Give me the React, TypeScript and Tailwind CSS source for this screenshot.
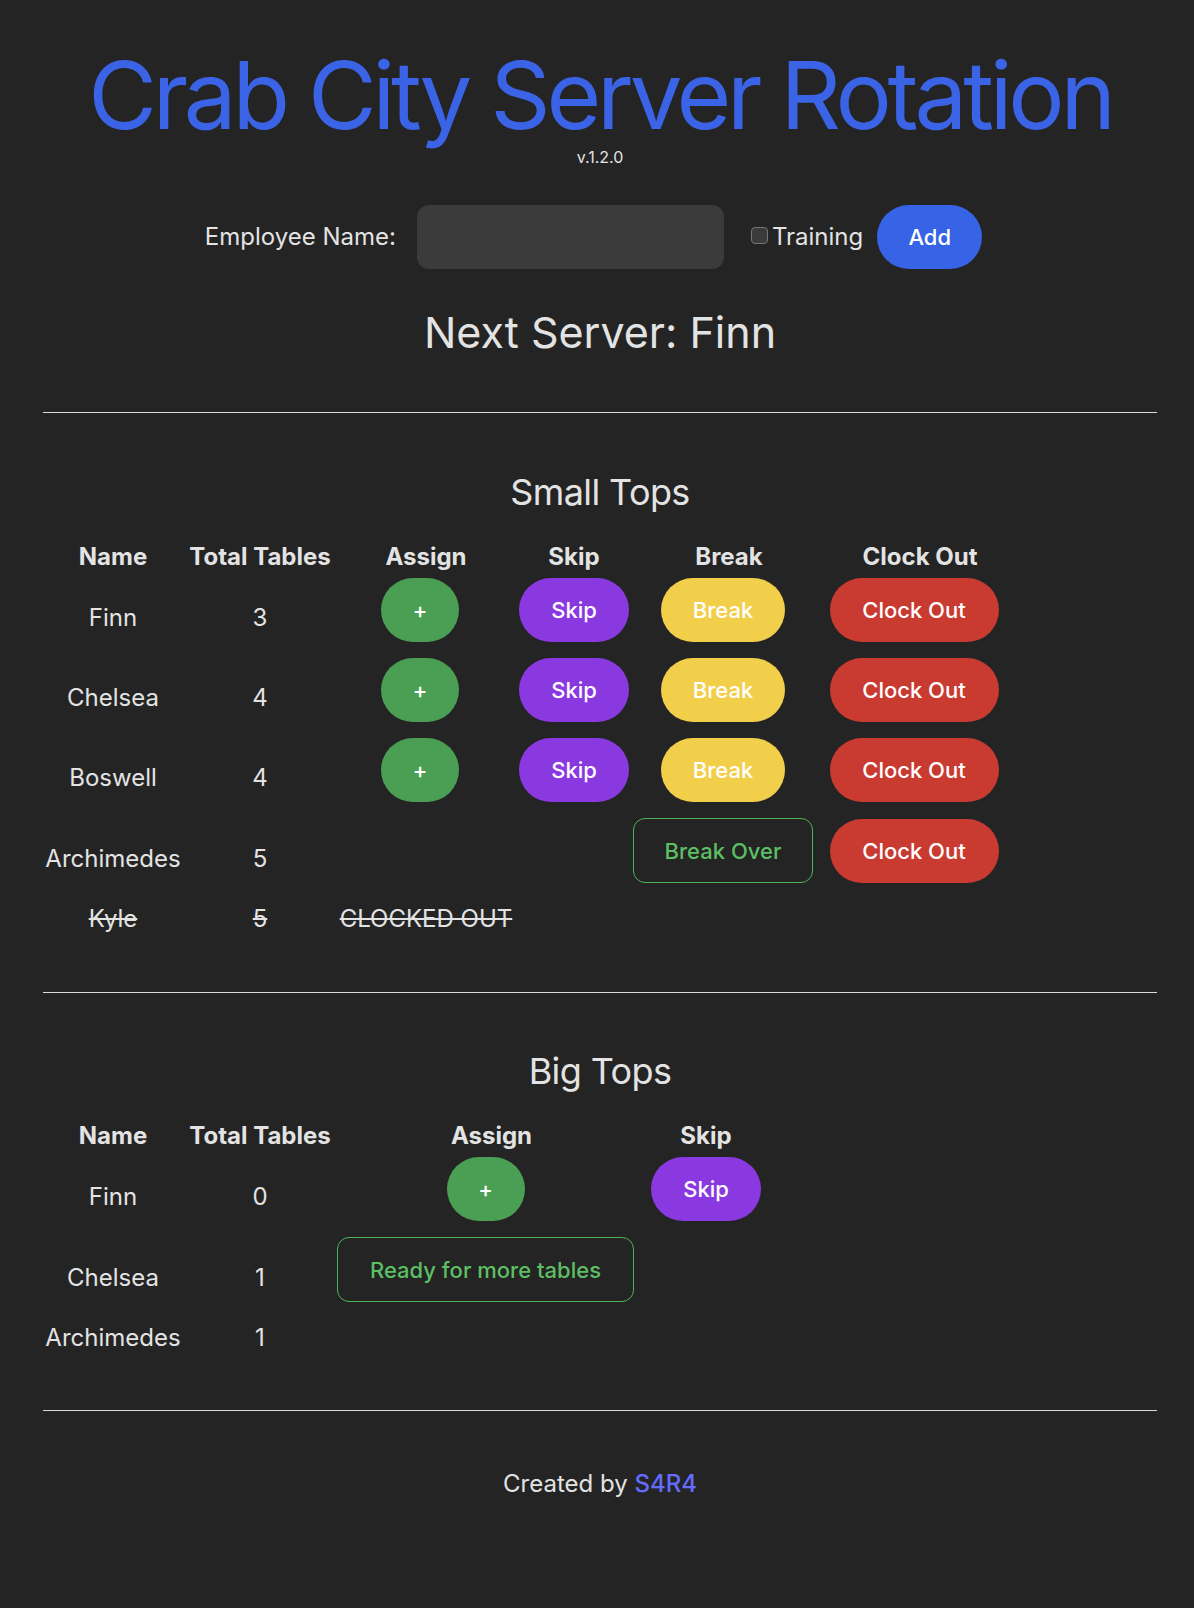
import { useState } from "react"

type SmallRow = { name: string; tables: number; status: "active" | "break" | "out" }
type BigRow = { name: string; tables: number; status: "active" | "ready" | "none" }

const smallTops: SmallRow[] = [
  { name: "Finn", tables: 3, status: "active" },
  { name: "Chelsea", tables: 4, status: "active" },
  { name: "Boswell", tables: 4, status: "active" },
  { name: "Archimedes", tables: 5, status: "break" },
  { name: "Kyle", tables: 5, status: "out" },
]

const bigTops: BigRow[] = [
  { name: "Finn", tables: 0, status: "active" },
  { name: "Chelsea", tables: 1, status: "ready" },
  { name: "Archimedes", tables: 1, status: "none" },
]

const pill = "h-16 rounded-full text-[22px] font-medium text-white"
const outline =
  "h-[65px] rounded-xl border border-[#4fb357] text-[22px] font-medium text-[#5cbf63]"

function Cell({ children, className = "" }: { children?: React.ReactNode; className?: string }) {
  return (
    <div className={`flex min-h-[40px] items-center justify-center text-2xl leading-9 ${className}`}>
      {children}
    </div>
  )
}

function Head({ children }: { children: React.ReactNode }) {
  return <div className="h-[38px] text-center text-2xl font-bold leading-[34px]">{children}</div>
}

export default function App() {
  const [name, setName] = useState("")
  const [training, setTraining] = useState(false)

  return (
    <div className="min-h-screen bg-[#242424] pl-[43px] pr-[37px] pt-[48px] font-['Inter',sans-serif] text-[#e3e3e3]">
      {/* Header */}
      <h1 className="text-center text-[94px] leading-none tracking-[-4.2px] text-[#3a63e5]">
        Crab City Server Rotation
      </h1>
      <p className="mt-[3px] text-center text-base leading-6">v.1.2.0</p>

      <div className="mt-[36px] flex items-center justify-center pr-[13px]">
        <label className="text-2xl leading-9">Employee Name:</label>
        <input
          value={name}
          onChange={(e) => setName(e.target.value)}
          className="ml-[21px] h-16 w-[307px] rounded-xl bg-[#3b3b3b] px-4 text-2xl outline-none"
        />
        <label className="ml-[27px] flex items-center gap-[4px] text-2xl leading-9">
          <input
            type="checkbox"
            checked={training}
            onChange={() => setTraining(!training)}
            className="-mt-[3px] h-[17px] w-[17px] appearance-none rounded-[4px] border border-[#767676] bg-[#3b3b3b]"
          />
          Training
        </label>
        <button className={`ml-[14px] w-[105px] bg-[#3763e6] ${pill}`}>Add</button>
      </div>

      <h2 className="mt-[32px] text-center text-[43px] leading-[63px]">Next Server: Finn</h2>

      <hr className="mt-[48px] border-[#dadada]" />

      {/* Small Tops */}
      <h2 className="mt-[52px] text-center text-4xl leading-[54px] tracking-[-0.6px]">Small Tops</h2>
      <div className="mt-[21px] grid grid-cols-[140px_146px_178px_110px_192px_182px] gap-x-[4px]">
        <Head>Name</Head>
        <Head>Total Tables</Head>
        <Head>Assign</Head>
        <Head>Skip</Head>
        <Head>Break</Head>
        <Head>Clock Out</Head>
        {smallTops.map((s) => {
          const out = s.status === "out"
          return (
            <div key={s.name} className="contents">
              <Cell className={out ? "line-through" : ""}>{s.name}</Cell>
              <Cell className={out ? "line-through" : ""}>{s.tables}</Cell>
              <Cell className={out ? "line-through" : ""}>
                {s.status === "active" && <button className={`mb-4 mr-3 w-[78px] bg-[#4a9f55] ${pill}`}>+</button>}
                {out && "CLOCKED OUT"}
              </Cell>
              <Cell>
                {s.status === "active" && <button className={`mb-4 w-[110px] bg-[#8a39e0] ${pill}`}>Skip</button>}
              </Cell>
              <Cell>
                {s.status === "active" && <button className={`mb-4 mr-3 w-[124px] bg-[#f2cf4b] ${pill}`}>Break</button>}
                {s.status === "break" && <button className={`mb-4 mr-3 w-[181px] ${outline}`}>Break Over</button>}
              </Cell>
              <Cell>
                {!out && <button className={`mb-4 mr-3 w-[169px] bg-[#c93a31] ${pill}`}>Clock Out</button>}
              </Cell>
            </div>
          )
        })}
      </div>

      <hr className="mt-[53px] border-[#dadada]" />

      {/* Big Tops */}
      <h2 className="mt-[51px] text-center text-4xl leading-[54px] tracking-[-0.6px]">Big Tops</h2>
      <div className="mt-[21px] grid grid-cols-[140px_146px_309px_112px] gap-x-[4px]">
        <Head>Name</Head>
        <Head>Total Tables</Head>
        <Head>Assign</Head>
        <Head>Skip</Head>
        {bigTops.map((b) => (
          <div key={b.name} className="contents">
            <Cell>{b.name}</Cell>
            <Cell>{b.tables}</Cell>
            <Cell>
              {b.status === "active" && <button className={`mb-4 mr-3 w-[78px] bg-[#4a9f55] ${pill}`}>+</button>}
              {b.status === "ready" && <button className={`mb-4 mr-3 w-[297px] ${outline}`}>Ready for more tables</button>}
            </Cell>
            <Cell>
              {b.status === "active" && <button className={`mb-4 w-[110px] bg-[#8a39e0] ${pill}`}>Skip</button>}
            </Cell>
          </div>
        ))}
      </div>

      <hr className="mt-[52px] border-[#dadada]" />

      {/* Footer */}
      <p className="mt-[55px] pb-[100px] text-center text-2xl leading-9">
        Created by <a className="font-medium text-[#646cff]">S4R4</a>
      </p>
    </div>
  )
}
